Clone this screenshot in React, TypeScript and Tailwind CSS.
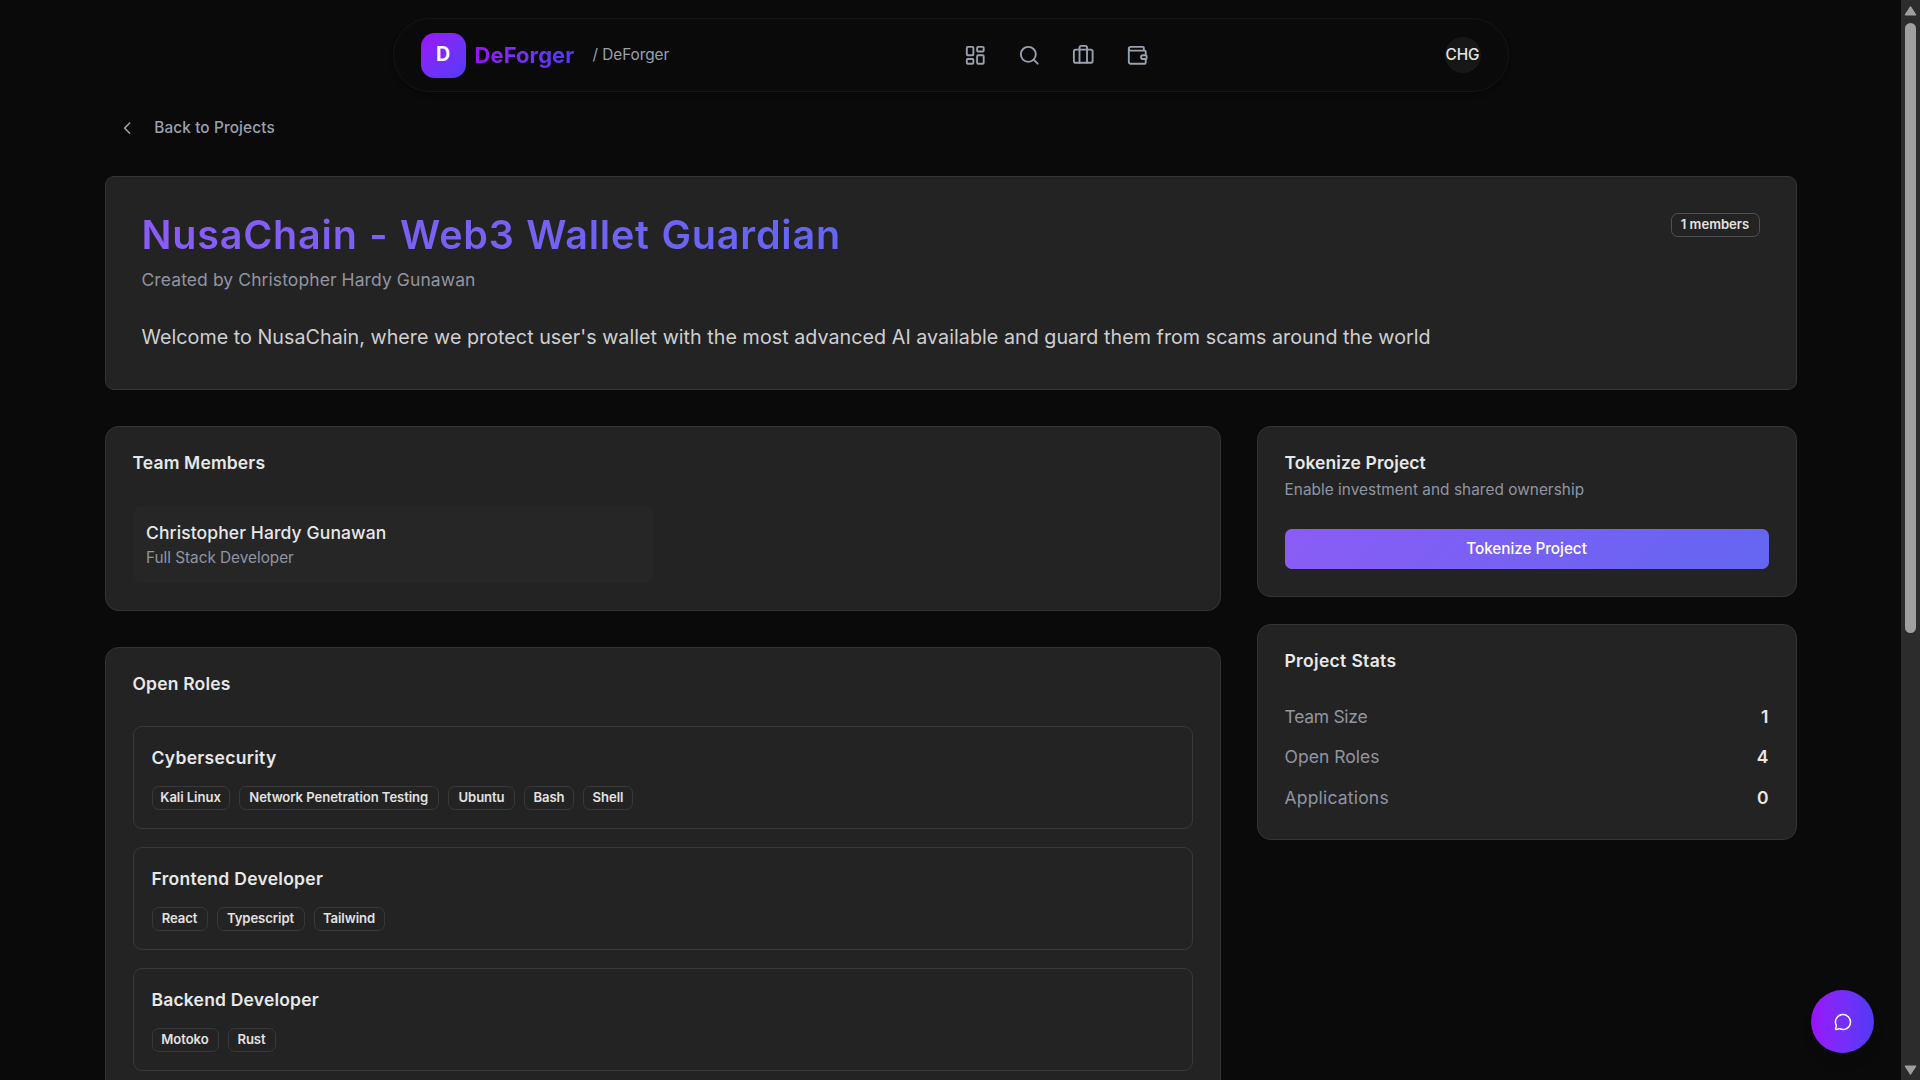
import { Briefcase, ChevronLeft, LayoutDashboard, MessageCircle, Search, Wallet } from "lucide-react";

type Skill = { name: string; width: string };
type Role = { title: string; tracking: string; skills: Skill[] };

const roles: Role[] = [
  {
    title: "Cybersecurity",
    tracking: "tracking-[0.018em]",
    skills: [
      { name: "Kali Linux", width: "w-[78px]" },
      { name: "Network Penetration Testing", width: "w-[200.5px]" },
      { name: "Ubuntu", width: "w-[67px]" },
      { name: "Bash", width: "w-[50px]" },
      { name: "Shell", width: "w-[50px]" },
    ],
  },
  {
    title: "Frontend Developer",
    tracking: "tracking-[0.016em]",
    skills: [
      { name: "React", width: "w-[56px]" },
      { name: "Typescript", width: "w-[88px]" },
      { name: "Tailwind", width: "w-[71px]" },
    ],
  },
  {
    title: "Backend Developer",
    tracking: "tracking-[0.011em]",
    skills: [
      { name: "Motoko", width: "w-[67px]" },
      { name: "Rust", width: "w-[48px]" },
    ],
  },
];

const stats = [
  { label: "Team Size", value: "1", tracking: "tracking-[-0.017em]" },
  { label: "Open Roles", value: "4", tracking: "tracking-[0.002em]" },
  { label: "Applications", value: "0", tracking: "tracking-[0.011em]" },
];

const navIcons = [LayoutDashboard, Search, Briefcase, Wallet];

function Badge({ name, width }: Skill) {
  return (
    <span
      className={`${width} flex h-[24px] shrink-0 items-center justify-center whitespace-nowrap rounded-[6.75px] border border-[#383838] pb-px text-[13.1px] font-semibold leading-[18px] tracking-[-0.005em] text-[#e2e2e3]`}
    >
      {name}
    </span>
  );
}

function Navbar() {
  return (
    <header className="mx-auto mt-4 flex h-[74px] w-[1116px] items-center justify-between rounded-full border border-[#151515] bg-[#0a0a0a] px-6 shadow-md">
      <div className="flex w-[247.5px] items-center whitespace-nowrap">
        <div className="flex size-10 shrink-0 items-center justify-center rounded-[13.5px] bg-gradient-to-br from-purple-600 to-indigo-600 pb-px text-[19.7px] font-bold text-white">
          D
        </div>
        <span className="ml-2 shrink-0 bg-gradient-to-r from-purple-600 to-indigo-600 bg-clip-text text-[21.9px] font-bold leading-8 tracking-[0.007em] text-transparent">
          DeForger
        </span>
        <span className="ml-4 shrink-0 text-[15.35px] tracking-[-0.002em] text-gray-400">/ DeForger</span>
      </div>
      <nav className="flex gap-3 text-gray-400">
        {navIcons.map((Icon, i) => (
          <a key={i} className="p-2">
            <Icon className="size-5" strokeWidth={2} />
          </a>
        ))}
      </nav>
      <div className="flex size-8 items-center justify-center rounded-full bg-[#171717] text-[15.35px] font-medium text-[#e5e5e5]">
        CHG
      </div>
    </header>
  );
}

function ProjectHeader() {
  return (
    <section className="h-[214px] rounded-[9px] border border-[#353535] bg-[#232323] p-8">
      <div className="flex items-start justify-between">
        <div>
          <h1 className="mb-[8px] w-max bg-[linear-gradient(135deg,#8b5cf6,#6366f1)] bg-clip-text text-[39.5px] font-semibold leading-[45px] tracking-[0.02em] text-transparent [word-spacing:0.9px]">
            NusaChain - Web3 Wallet Guardian
          </h1>
          <p className="text-[17.5px] leading-[27px] tracking-[0.005em] text-[#9195a1]">
            Created by Christopher Hardy Gunawan
          </p>
        </div>
        <span className="flex h-[24px] w-[89px] items-center justify-center rounded-[6.75px] border border-[#505050] pb-px text-[13.1px] font-semibold text-[#e2e2e3]">
          1 members
        </span>
      </div>
      <p className="mt-[28px] whitespace-nowrap text-[19.7px] leading-[33px] tracking-[0.002em] text-[#cfcfd1]">
        Welcome to NusaChain, where we protect user's wallet with the most advanced AI available and guard them from
        scams around the world
      </p>
    </section>
  );
}

function TeamMembers() {
  return (
    <section className="rounded-[13.5px] border border-[#353535] bg-[#232323] p-6">
      <h2 className="mb-[33.75px] text-[17.5px] font-semibold leading-[18px] tracking-[0.008em] text-[#e8e8e9]">
        Team Members
      </h2>
      <div className="grid grid-cols-2 gap-4">
        <div className="rounded-[9px] bg-[#262626] p-3">
          <p className="text-[17.5px] font-medium leading-[27px] tracking-[0.006em] text-[#e8e8e9]">
            Christopher Hardy Gunawan
          </p>
          <p className="text-[15.35px] leading-[23px] tracking-[-0.002em] text-[#9195a1]">Full Stack Developer</p>
        </div>
      </div>
    </section>
  );
}

function OpenRoles() {
  return (
    <section className="rounded-[13.5px] border border-[#353535] bg-[#232323] p-6">
      <h2 className="mb-[33px] text-[17.5px] font-semibold leading-[18px] tracking-[0.01em] text-[#e8e8e9]">
        Open Roles
      </h2>
      <div className="flex flex-col gap-4">
        {roles.map((role) => (
          <article key={role.title} className="h-[103px] rounded-[9px] border border-[#383838] p-4">
            <h3 className={`${role.tracking} mb-[15px] text-[17.5px] font-semibold leading-[26px] text-[#e8e8e9]`}>
              {role.title}
            </h3>
            <div className="flex gap-2">
              {role.skills.map((skill) => (
                <Badge key={skill.name} {...skill} />
              ))}
            </div>
          </article>
        ))}
        <div className="h-[103px] rounded-[9px] border border-[#383838]" />
      </div>
    </section>
  );
}

function TokenizeCard() {
  return (
    <section className="rounded-[13.5px] border border-[#353535] bg-[#232323] p-6">
      <h2 className="text-[17.5px] font-semibold leading-[18px] tracking-[0.004em] text-[#e8e8e9]">
        Tokenize Project
      </h2>
      <p className="mb-[27.5px] mt-[6.75px] text-[15.35px] leading-[22.5px] tracking-[0.003em] text-[#9195a1]">
        Enable investment and shared ownership
      </p>
      <button className="block h-[40px] w-full rounded-[6.75px] bg-[linear-gradient(135deg,#8b5cf6,#6366f1)] pb-px text-[15.35px] font-medium tracking-[-0.004em] text-white">
        Tokenize Project
      </button>
    </section>
  );
}

function StatsCard() {
  return (
    <section className="rounded-[13.5px] border border-[#353535] bg-[#232323] p-6">
      <h2 className="mb-[33.75px] text-[17.5px] font-semibold leading-[18px] tracking-[0.019em] text-[#e8e8e9]">
        Project Stats
      </h2>
      <dl className="flex flex-col gap-[15.5px] pb-[2px] text-[17.5px] leading-[25px]">
        {stats.map((stat) => (
          <div key={stat.label} className="flex justify-between">
            <dt className={`${stat.tracking} text-[#9195a1]`}>{stat.label}</dt>
            <dd className="font-semibold text-[#e8e8e9]">{stat.value}</dd>
          </div>
        ))}
      </dl>
    </section>
  );
}

function Scrollbar() {
  return (
    <div className="flex w-[19px] shrink-0 flex-col items-center bg-[#2c2c2c]">
      <svg className="mt-[5px] h-[11px] w-[13px]" viewBox="0 0 13 11" fill="#9f9f9f" stroke="#9f9f9f" strokeLinejoin="round">
        <path d="M6.5 1.5 12 10H1Z" />
      </svg>
      <div className="mt-[7px] h-[610px] w-[11px] rounded-full bg-[#9f9f9f]" />
      <svg className="mb-[4px] mt-auto h-[11px] w-[13px]" viewBox="0 0 13 11" fill="#9f9f9f" stroke="#9f9f9f" strokeLinejoin="round">
        <path d="M1 1H12L6.5 9.5Z" />
      </svg>
    </div>
  );
}

export default function App() {
  return (
    <div className="flex h-screen overflow-hidden bg-[#0a0a0a] font-['Inter',sans-serif] [--spacing:4.5px]">
      <div className="min-w-0 flex-1 overflow-hidden">
        <Navbar />
        <main className="mx-auto mt-[15.5px] w-[1692px]">
          <a className="flex h-9 items-center gap-[17.5px] pl-[12px] text-[15.35px] font-medium tracking-[0.008em] text-[#9aa1ad]">
            <ChevronLeft className="size-[20.25px]" strokeWidth={1.75} />
            Back to Projects
          </a>
          <div className="mt-[28px] flex flex-col gap-8">
            <ProjectHeader />
            <div className="grid grid-cols-3 items-start gap-8">
              <div className="col-span-2 flex flex-col gap-8">
                <TeamMembers />
                <OpenRoles />
              </div>
              <aside className="flex flex-col gap-6">
                <TokenizeCard />
                <StatsCard />
              </aside>
            </div>
          </div>
        </main>
      </div>
      <Scrollbar />
      <button className="fixed bottom-6 right-[46px] flex size-14 items-center justify-center rounded-full bg-gradient-to-r from-purple-600 to-indigo-600 text-white shadow-lg">
        <MessageCircle className="size-[18px]" strokeWidth={2} />
      </button>
    </div>
  );
}
